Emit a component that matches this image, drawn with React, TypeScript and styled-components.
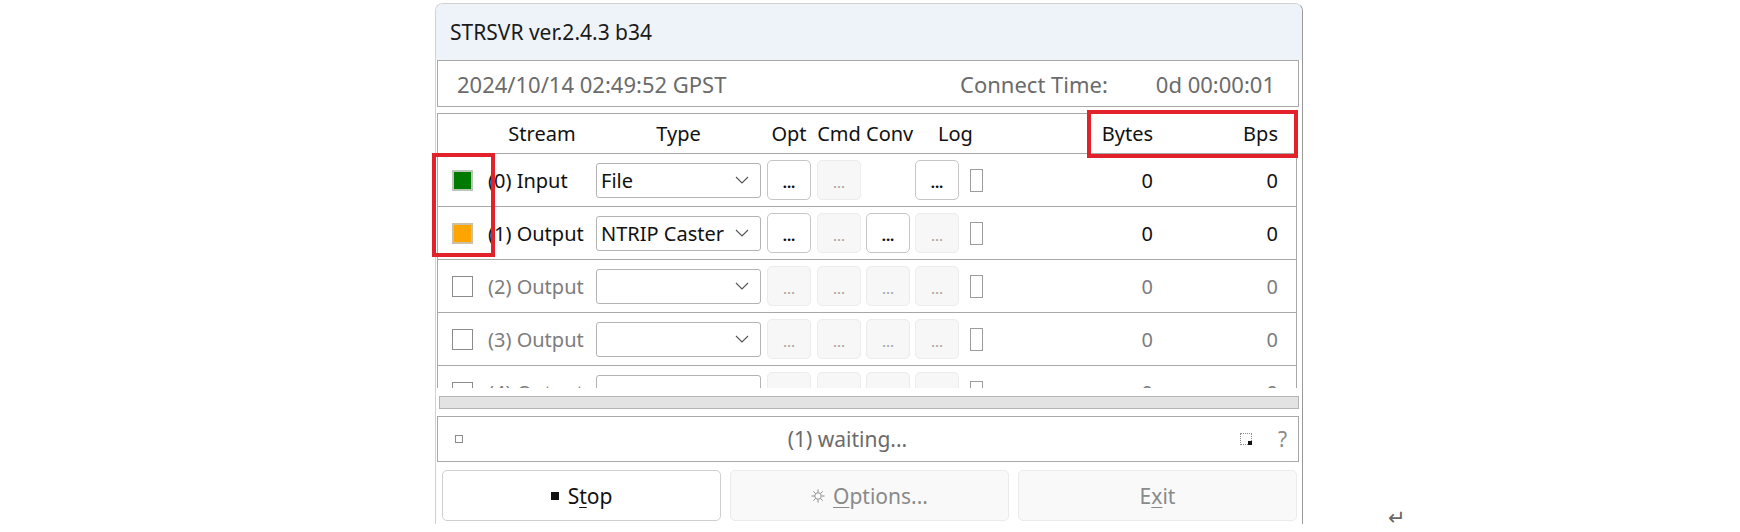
import styled, { createGlobalStyle } from 'styled-components';

const GlobalStyle = createGlobalStyle`
  html, body {
    margin: 0;
    padding: 0;
    background: #ffffff;
  }
  body {
    font-family: "Noto Sans", "Open Sans", sans-serif;
    color: #111;
  }
`;

type StreamState = 'green' | 'orange' | 'off';
type BtnState = 'on' | 'off' | 'none';

interface Stream {
  label: string;
  state: StreamState;
  type: string;
  opt: BtnState;
  cmd: BtnState;
  conv: BtnState;
  log: BtnState;
}

const streams: Stream[] = [
  { label: '(0) Input', state: 'green', type: 'File', opt: 'on', cmd: 'off', conv: 'none', log: 'on' },
  { label: '(1) Output', state: 'orange', type: 'NTRIP Caster', opt: 'on', cmd: 'off', conv: 'on', log: 'off' },
  { label: '(2) Output', state: 'off', type: '', opt: 'off', cmd: 'off', conv: 'off', log: 'off' },
  { label: '(3) Output', state: 'off', type: '', opt: 'off', cmd: 'off', conv: 'off', log: 'off' },
  { label: '(4) Output', state: 'off', type: '', opt: 'off', cmd: 'off', conv: 'off', log: 'off' },
];

const App = () => {
  return (
    <Page>
      <GlobalStyle />
      <Window>
        <TitleBar>STRSVR ver.2.4.3 b34</TitleBar>
        <Body>
          <TimeBox>
            <span>2024/10/14 02:49:52 GPST</span>
            <ConnectGroup>
              <span>Connect Time:</span>
              <span>0d 00:00:01</span>
            </ConnectGroup>
          </TimeBox>

          <StreamTable>
            <HeaderRow>
              <HeadCell $col={2}>Stream</HeadCell>
              <HeadCell $col={3} $pr={6}>Type</HeadCell>
              <HeadCell $col={4} $w={44}>Opt</HeadCell>
              <HeadCell $col={5} $w={44}>Cmd</HeadCell>
              <HeadCell $col={6} $w={44}>Conv</HeadCell>
              <HeadCell $col={7} $align="left" $pl={23}>Log</HeadCell>
              <HeadCell $col={9} $align="right">Bytes</HeadCell>
              <HeadCell $col={10} $align="right">Bps</HeadCell>
            </HeaderRow>
            {streams.map((s) => {
              const active = s.state !== 'off';
              return (
                <StreamRow key={s.label}>
                  <CheckCell>
                    <StateBox $state={s.state} />
                  </CheckCell>
                  <Label $active={active}>{s.label}</Label>
                  <TypeCell>
                    <Select>
                      <span>{s.type}</span>
                      <svg width="14" height="8" viewBox="0 0 14 8">
                        <polyline points="1,1 7,7 13,1" fill="none" stroke="#555" strokeWidth="1.1" />
                      </svg>
                    </Select>
                  </TypeCell>
                  {[s.opt, s.cmd, s.conv, s.log].map((b, i) => (
                    <BtnCell key={i}>
                      {b !== 'none' && <DotsButton $on={b === 'on'}>...</DotsButton>}
                    </BtnCell>
                  ))}
                  <BtnCell>
                    <LogCheck />
                  </BtnCell>
                  <Value $active={active}>0</Value>
                  <Value $active={active}>0</Value>
                </StreamRow>
              );
            })}
          </StreamTable>

          <HScroll />

          <StatusBox>
            <SmallSquare />
            <StatusText>(1) waiting...</StatusText>
            <StatusRight>
              <DottedBox />
              <Help>?</Help>
            </StatusRight>
          </StatusBox>

          <ButtonRow>
            <BigButton $on>
              <StopIcon />
              <span>
                S<u>t</u>op
              </span>
            </BigButton>
            <BigButton>
              <svg width="14" height="14" viewBox="0 0 14 14">
                <circle cx="7" cy="7" r="3.3" fill="none" stroke="#8a8a8a" strokeWidth="1" />
                <g stroke="#8a8a8a" strokeWidth="1">
                  <line x1="7" y1="0.5" x2="7" y2="3" />
                  <line x1="7" y1="11" x2="7" y2="13.5" />
                  <line x1="0.5" y1="7" x2="3" y2="7" />
                  <line x1="11" y1="7" x2="13.5" y2="7" />
                  <line x1="2.4" y1="2.4" x2="4.1" y2="4.1" />
                  <line x1="9.9" y1="9.9" x2="11.6" y2="11.6" />
                  <line x1="2.4" y1="11.6" x2="4.1" y2="9.9" />
                  <line x1="9.9" y1="4.1" x2="11.6" y2="2.4" />
                </g>
              </svg>
              <span>
                <u>O</u>ptions...
              </span>
            </BigButton>
            <BigButton>
              <span>
                E<u>x</u>it
              </span>
            </BigButton>
          </ButtonRow>
        </Body>
      </Window>
      <Return>↵</Return>

      <Mark $x={432} $y={153} $w={63} $h={104} />
      <Mark $x={1087} $y={110} $w={211} $h={48} />
    </Page>
  );
};

const Page = styled.div`
  position: relative;
  display: flex;
  width: 1740px;
  height: 532px;
  box-sizing: border-box;
  padding: 3px 0 0 435px;
  overflow: hidden;
`;

const Window = styled.div`
  width: 868px;
  height: 521px;
  box-sizing: border-box;
  border: 1px solid #d2d2d2;
  border-right-color: #9a9a9a;
  border-bottom: none;
  border-radius: 8px 8px 0 0;
  background: #ffffff;
  display: flex;
  flex-direction: column;
  overflow: hidden;
`;

const TitleBar = styled.div`
  height: 56px;
  flex-shrink: 0;
  display: flex;
  align-items: center;
  padding-left: 14px;
  background: #eef3f9;
  font-size: 21px;
  color: #1a1a1a;
`;

const Body = styled.div`
  display: flex;
  flex-direction: column;
  padding: 0 3px 0 1px;
`;

const TimeBox = styled.div`
  height: 47px;
  box-sizing: border-box;
  border: 1px solid #a8a8a8;
  display: flex;
  align-items: center;
  justify-content: space-between;
  padding: 0 23px 0 19px;
  font-size: 22px;
  color: #6b6b6b;
`;

const ConnectGroup = styled.div`
  display: flex;
  gap: 48px;
`;

const StreamTable = styled.div`
  margin: 6px 2px 0 0;
  height: 275px;
  box-sizing: border-box;
  border: 1px solid #a8a8a8;
  border-bottom: none;
  overflow: hidden;
`;

const gridCols = '50px 108px 171px 50px 49px 49px 50px 30px 1fr 125px';

const HeaderRow = styled.div`
  display: grid;
  grid-template-columns: ${gridCols};
  height: 40px;
  box-sizing: border-box;
  padding-right: 18px;
  border-bottom: 1px solid #a8a8a8;
  align-items: center;
  font-size: 20px;
  color: #111;
`;

const HeadCell = styled.div<{ $col: number; $align?: string; $w?: number; $pl?: number; $pr?: number }>`
  grid-column: ${(p) => (p.$align === 'left' && p.$col === 7 ? '7 / span 2' : p.$col)};
  grid-row: 1;
  text-align: ${(p) => p.$align || 'center'};
  width: ${(p) => (p.$w ? `${p.$w}px` : 'auto')};
  padding-left: ${(p) => p.$pl || 0}px;
  padding-right: ${(p) => p.$pr || 0}px;
  white-space: nowrap;
`;

const StreamRow = styled.div`
  display: grid;
  grid-template-columns: ${gridCols};
  height: 53px;
  box-sizing: border-box;
  padding-right: 18px;
  border-bottom: 1px solid #a8a8a8;
  align-items: center;
  font-size: 20px;
  flex-shrink: 0;
`;

const CheckCell = styled.div`
  padding-left: 14px;
  display: flex;
  align-items: center;
`;

const StateBox = styled.div<{ $state: StreamState }>`
  width: 21px;
  height: 21px;
  box-sizing: border-box;
  border: ${(p) => (p.$state === 'off' ? '1px solid #8c8c8c' : '2px solid #b9c7b9')};
  background: ${(p) => (p.$state === 'green' ? '#007a00' : p.$state === 'orange' ? '#ffa500' : '#ffffff')};
  border-color: ${(p) => (p.$state === 'orange' ? '#cdbfa2' : undefined)};
`;

const Label = styled.div<{ $active: boolean }>`
  color: ${(p) => (p.$active ? '#111' : '#7d7d7d')};
  white-space: nowrap;
`;

const TypeCell = styled.div`
  display: flex;
`;

const Select = styled.div`
  width: 165px;
  height: 35px;
  box-sizing: border-box;
  border: 1px solid #b3b3b3;
  border-radius: 3px;
  background: #ffffff;
  display: flex;
  align-items: center;
  justify-content: space-between;
  padding: 0 11px 0 4px;
  font-size: 20px;
  color: #111;
  white-space: nowrap;
  overflow: hidden;
`;

const BtnCell = styled.div`
  display: flex;
  align-items: center;
`;

const DotsButton = styled.div<{ $on: boolean }>`
  width: 44px;
  height: 40px;
  box-sizing: border-box;
  border: 1px solid ${(p) => (p.$on ? '#c6c6c6' : '#ececec')};
  border-radius: 5px;
  background: ${(p) => (p.$on ? '#ffffff' : '#f7f7f7')};
  color: ${(p) => (p.$on ? '#111' : '#a0a0a0')};
  font-weight: ${(p) => (p.$on ? 700 : 400)};
  font-size: 15px;
  display: flex;
  align-items: center;
  justify-content: center;
  padding-top: 4px;
`;

const LogCheck = styled.div`
  width: 13px;
  height: 23px;
  margin-left: 5px;
  box-sizing: border-box;
  border: 1px solid #9c9c9c;
  background: #ffffff;
`;

const Value = styled.div<{ $active: boolean }>`
  text-align: right;
  color: ${(p) => (p.$active ? '#111' : '#7d7d7d')};
`;

const HScroll = styled.div`
  margin: 8px 0 0 2px;
  height: 13px;
  box-sizing: border-box;
  border: 1px solid #b5b5b5;
  background: #e3e3e3;
`;

const StatusBox = styled.div`
  margin-top: 7px;
  height: 46px;
  box-sizing: border-box;
  border: 1px solid #a8a8a8;
  display: flex;
  align-items: center;
  padding: 0 11px 0 17px;
`;

const SmallSquare = styled.div`
  width: 8px;
  height: 8px;
  box-sizing: border-box;
  border: 1px solid #8c8c8c;
`;

const StatusText = styled.div`
  flex: 1;
  text-align: center;
  font-size: 21px;
  color: #6b6b6b;
  padding-right: 8px;
`;

const StatusRight = styled.div`
  display: flex;
  align-items: center;
  gap: 26px;
`;

const DottedBox = styled.div`
  position: relative;
  width: 12px;
  height: 12px;
  box-sizing: border-box;
  border: 1px dotted #8c8c8c;

  &::after {
    content: '';
    position: absolute;
    right: -1px;
    bottom: -1px;
    width: 4px;
    height: 4px;
    background: #111;
  }
`;

const Help = styled.div`
  font-size: 21px;
  color: #8a8a8a;
`;

const ButtonRow = styled.div`
  margin-top: 8px;
  display: flex;
  gap: 9px;
  padding: 0 2px 0 5px;
`;

const BigButton = styled.div<{ $on?: boolean }>`
  flex: 1;
  height: 51px;
  box-sizing: border-box;
  border: 1px solid ${(p) => (p.$on ? '#cfcfcf' : '#ebebeb')};
  border-radius: 5px;
  background: ${(p) => (p.$on ? '#ffffff' : '#f9f9f9')};
  color: ${(p) => (p.$on ? '#111' : '#8a8a8a')};
  display: flex;
  align-items: center;
  justify-content: center;
  gap: 8px;
  font-size: 21px;

  u {
    text-underline-offset: 3px;
    text-decoration-thickness: 1px;
  }
`;

const StopIcon = styled.span`
  display: inline-block;
  width: 8px;
  height: 8px;
  background: #111;
  margin-right: 1px;
`;

const Return = styled.div`
  align-self: flex-end;
  margin: 0 0 2px 85px;
  font-family: "DejaVu Sans", sans-serif;
  font-size: 21px;
  color: #666;
`;

const Mark = styled.div<{ $x: number; $y: number; $w: number; $h: number }>`
  position: absolute;
  left: ${(p) => p.$x}px;
  top: ${(p) => p.$y}px;
  width: ${(p) => p.$w}px;
  height: ${(p) => p.$h}px;
  box-sizing: border-box;
  border: 4px solid #e1222b;
  pointer-events: none;
`;

export default App;
